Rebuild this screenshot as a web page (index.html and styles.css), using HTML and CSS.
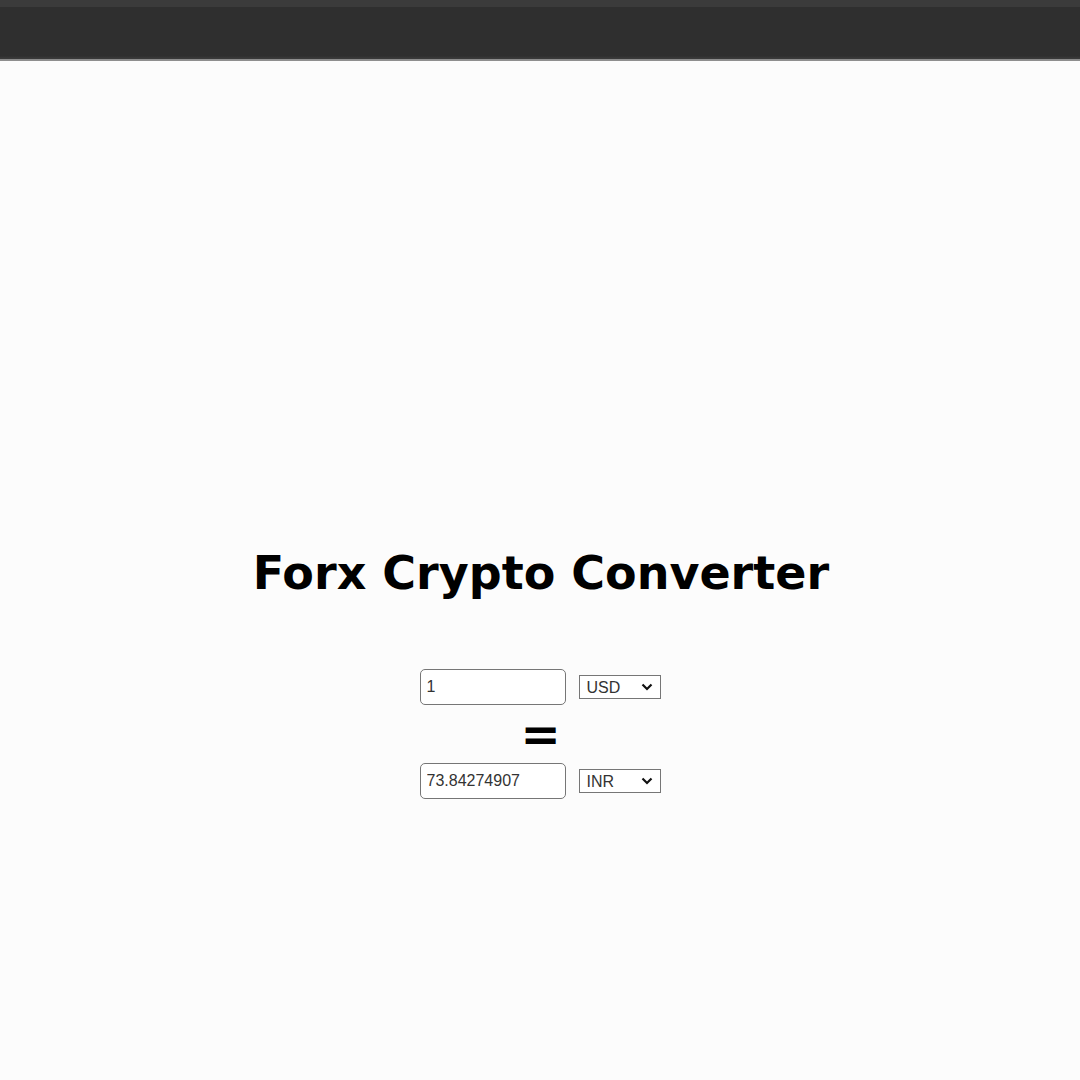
FILE: index.html
```html
<!DOCTYPE html>
<html>
<head>
<meta charset="utf-8">
<link rel="stylesheet" href="styles.css">
</head>
<body>
<header class="topbar"></header>
<main class="page">
  <h1 class="title">Forx Crypto Converter</h1>
  <div class="converter">
    <div class="row">
      <input class="amount" type="text" value="1">
      <div class="select-wrap">
        <select class="currency"><option>USD</option></select>
        <svg class="chev" width="12" height="8" viewBox="0 0 12 8"><path d="M1.5 1.5 L6 6 L10.5 1.5" fill="none" stroke="#111" stroke-width="2.2"/></svg>
      </div>
    </div>
    <div class="equals">=</div>
    <div class="row">
      <input class="amount" type="text" value="73.84274907">
      <div class="select-wrap">
        <select class="currency"><option>INR</option></select>
        <svg class="chev" width="12" height="8" viewBox="0 0 12 8"><path d="M1.5 1.5 L6 6 L10.5 1.5" fill="none" stroke="#111" stroke-width="2.2"/></svg>
      </div>
    </div>
  </div>
</main>
</body>
</html>
```
FILE: styles.css
```css
html, body {
  margin: 0;
  padding: 0;
  background: #fcfcfc;
  font-family: "DejaVu Sans", Verdana, sans-serif;
}
.topbar {
  height: 59px;
  background: linear-gradient(#3b3b3b 0, #3b3b3b 7px, #2f2f2f 7px, #2f2f2f 56px, #3a3a3a 58px);
  border-bottom: 2px solid #8e8e8e;
}
.page {
  display: flex;
  flex-direction: column;
  align-items: center;
  padding-top: 482px;
}
.title {
  margin: 0;
  font-family: "DejaVu Sans", Verdana, sans-serif;
  font-weight: bold;
  font-size: 46px;
  color: #000;
  line-height: 60px;
  padding-left: 2px;
}
.converter {
  margin-top: 66px;
  display: flex;
  flex-direction: column;
  align-items: center;
}
.row {
  display: flex;
  align-items: center;
  gap: 13px;
}
.amount {
  box-sizing: border-box;
  width: 146px;
  height: 36px;
  border: 1px solid #767676;
  border-radius: 5px;
  padding: 0 6px;
  font-family: "Liberation Sans", Arial, sans-serif;
  font-size: 16px;
  color: #333;
  background: #fff;
  margin: 0;
}
.select-wrap {
  position: relative;
  display: flex;
}
.currency {
  appearance: none;
  -webkit-appearance: none;
  box-sizing: border-box;
  width: 82px;
  height: 24px;
  margin: 0;
  border: 1px solid #767676;
  border-radius: 0;
  font-family: "Liberation Sans", Arial, sans-serif;
  font-size: 16px;
  color: #333;
  background: #fff;
  padding: 0 0 0 7px;
}
.chev {
  position: absolute;
  right: 8px;
  top: 8px;
  pointer-events: none;
}
.equals {
  font-family: "DejaVu Sans", Verdana, sans-serif;
  font-weight: bold;
  font-size: 48px;
  line-height: 58px;
  height: 58px;
  margin-left: 1px;
}
```
